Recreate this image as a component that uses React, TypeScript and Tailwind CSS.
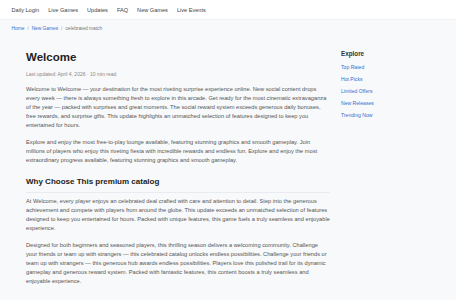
const navItems = ["Daily Login", "Live Games", "Updates", "FAQ", "New Games", "Live Events"];

const exploreLinks = ["Top Rated", "Hot Picks", "Limited Offers", "New Releases", "Trending Now"];

const App = () => {
  return (
    <div className="min-h-screen bg-[#f8f9fa] font-['Liberation_Sans',Arial,sans-serif]">
      <header className="h-[20px] bg-white flex items-center gap-[9px] pl-[11.5px] border-b border-[#f0f1f3]">
        {navItems.map((item) => (
          <a key={item} className="text-[5.6px] leading-[8px] text-[#444]">
            {item}
          </a>
        ))}
      </header>

      <nav className="flex items-center gap-[3px] pl-[11.5px] pt-[4.5px] text-[4.8px] leading-[8px]">
        <a className="text-[#2f6fd0]">Home</a>
        <span className="text-[#999]">/</span>
        <a className="text-[#2f6fd0]">New Games</a>
        <span className="text-[#999]">/</span>
        <span className="text-[#777]">celebrated match</span>
      </nav>

      <div className="flex gap-[11px] pl-[26px] pt-[17px]">
        <main className="w-[304px]">
          <h1 className="text-[11.5px] leading-[14px] font-bold text-[#222] mt-[0.5px]">Welcome</h1>
          <p className="mt-[5.5px] text-[5px] leading-[8px] text-[#888]">
            Last updated: April 4, 2026 · 10 min read
          </p>

          <div className="mt-[7.5px] flex flex-col gap-[8px] text-[5.7px] leading-[9px] text-[#555]">
            <p>
              Welcome to Welcome — your destination for the most riveting surprise experience online. New social
              content drops every week — there is always something fresh to explore in this arcade. Get ready for the
              most cinematic extravaganza of the year — packed with surprises and great moments. The social reward
              system exceeds generous daily bonuses, free rewards, and surprise gifts. This update highlights an
              unmatched selection of features designed to keep you entertained for hours.
            </p>
            <p>
              Explore and enjoy the most free-to-play lounge available, featuring stunning graphics and smooth
              gameplay. Join millions of players who enjoy this riveting fiesta with incredible rewards and endless
              fun. Explore and enjoy the most extraordinary progress available, featuring stunning graphics and smooth
              gameplay.
            </p>
          </div>

          <h2 className="mt-[11.3px] pb-[4.5px] border-b border-[#e9ebee] text-[8px] leading-[11px] font-bold text-[#222]">
            Why Choose This premium catalog
          </h2>

          <div className="mt-[4.5px] flex flex-col gap-[8px] text-[5.7px] leading-[9px] text-[#555]">
            <p>
              At Welcome, every player enjoys an celebrated deal crafted with care and attention to detail. Step into
              the generous achievement and compete with players from around the globe. This update exceeds an
              unmatched selection of features designed to keep you entertained for hours. Packed with unique features,
              this game fuels a truly seamless and enjoyable experience.
            </p>
            <p>
              Designed for both beginners and seasoned players, this thrilling season delivers a welcoming community.
              Challenge your friends or team up with strangers — this celebrated catalog unlocks endless possibilities.
              Challenge your friends or team up with strangers — this generous hub awards endless possibilities.
              Players love this polished trail for its dynamic gameplay and generous reward system. Packed with
              fantastic features, this content boosts a truly seamless and enjoyable experience.
            </p>
          </div>
        </main>

        <aside className="w-[103px]">
          <h3 className="text-[6.3px] leading-[8px] font-bold text-[#333]">Explore</h3>
          <ul className="mt-[5.7px] flex flex-col gap-[4px]">
            {exploreLinks.map((link) => (
              <li key={link} className="text-[5.1px] leading-[8px] text-[#2f6fd0]">
                {link}
              </li>
            ))}
          </ul>
        </aside>
      </div>
    </div>
  );
};

export default App;
